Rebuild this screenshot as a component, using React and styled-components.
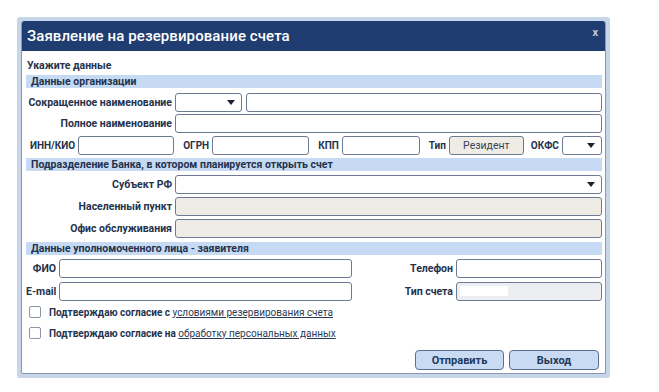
import React from "react";
import styled, { createGlobalStyle } from "styled-components";

const Global = createGlobalStyle`
  body {
    margin: 0;
    background: #fff;
    font-family: Roboto, "Liberation Sans", sans-serif;
  }
`;

const Page = styled.div`
  padding: 17px 0 0 17px;
`;

const Frame = styled.div`
  width: 585px;
  border: 4px solid #c6d6e8;
  border-radius: 3px;
  background: #c6d6e8;
`;

const Dialog = styled.div`
  background: #fff;
  border: 1px solid #8798b2;
  border-top: none;
  border-radius: 3px 3px 2px 2px;
  height: 353px;
  box-sizing: border-box;
  overflow: hidden;
`;

const Header = styled.div`
  height: 30px;
  background: #1f3d70;
  display: flex;
  align-items: center;
  justify-content: space-between;
  padding: 0 8px 0 6px;
  margin: 0 -1px;
`;

const Title = styled.div`
  color: #fff;
  font-size: 15px;
  font-weight: 500;
  letter-spacing: 0.1px;
`;

const Close = styled.div`
  color: #c3cad6;
  font-size: 11px;
  font-weight: 700;
  margin-top: -7px;
`;

const Body = styled.div`
  padding: 9px 3px 0 4px;
  color: #24324c;
  font-size: 10.5px;
  font-weight: 500;
`;

const Hint = styled.div`
  font-weight: 700;
  padding-left: 1px;
  line-height: 12px;
  margin-bottom: 3px;
`;

const SectionBar = styled.div`
  background: #c6daf4;
  height: 13px;
  line-height: 13px;
  padding-left: 5px;
  font-weight: 700;
  margin: ${(p) => p.$m || "0"};
`;

const FormGrid = styled.div`
  display: grid;
  grid-template-columns: 146px 1fr;
  column-gap: 3px;
  row-gap: ${(p) => p.$gap || "2px"};
  margin-top: ${(p) => p.$top || "4px"};
`;

const Label = styled.div`
  text-align: right;
  font-weight: 700;
  white-space: nowrap;
  align-self: center;
`;

const Field = styled.div`
  position: relative;
  height: 19px;
  box-sizing: border-box;
  border: 1px solid #6d7b92;
  border-radius: 3px;
  background: ${(p) => p.$bg || "#fff"};
  width: ${(p) => p.$w || "auto"};
  flex: ${(p) => (p.$w ? "none" : "1")};
`;

const Arrow = styled.span`
  position: absolute;
  right: 6px;
  top: 6px;
  width: 0;
  height: 0;
  border-left: 4px solid transparent;
  border-right: 4px solid transparent;
  border-top: 5px solid #1c2230;
`;

const Row = styled.div`
  display: flex;
  align-items: center;
  gap: 3px;
  margin-top: 3px;
`;

const Split = styled.div`
  display: flex;
  gap: 4px;
`;

const InlineLabel = styled.span`
  font-weight: 700;
  font-size: 10px;
  white-space: nowrap;
  flex: none;
  margin-left: ${(p) => p.$ml || "0"};
`;

const Resident = styled.div`
  width: 75px;
  height: 19px;
  flex: none;
  box-sizing: border-box;
  border: 1px solid #6d7b92;
  border-radius: 3px;
  background: #efebe5;
  display: flex;
  align-items: center;
  justify-content: center;
  font-weight: 400;
  color: #3a4458;
`;

const PersonGrid = styled.div`
  display: grid;
  grid-template-columns: 30px 293px 1fr 146px;
  column-gap: 3px;
  row-gap: 4px;
  margin-top: 4px;
`;

const Patch = styled.div`
  position: absolute;
  left: 3px;
  top: 3px;
  width: 48px;
  height: 10px;
  background: #fff;
`;

const Check = styled.label`
  display: flex;
  align-items: center;
  height: 14px;
  margin: ${(p) => p.$m || "0"};
  padding-left: 3px;
  font-weight: 700;
  font-size: 10px;
  white-space: pre;
`;

const Box = styled.span`
  width: 10px;
  height: 10px;
  border: 1px solid #8b95a7;
  border-radius: 2px;
  background: #fff;
  margin-right: 8px;
`;

const Link = styled.a`
  color: #2b3a55;
  font-weight: 400;
  font-size: 10px;
  text-decoration: underline;
`;

const Buttons = styled.div`
  display: flex;
  justify-content: flex-end;
  gap: 5px;
  margin-top: 10px;
  padding-right: 3px;
`;

const Button = styled.button`
  width: ${(p) => p.$w || "89px"};
  height: 20px;
  border: 1px solid #5b6e8e;
  border-radius: 4px;
  background: #c9dbf3;
  color: #22385c;
  font-family: inherit;
  font-size: 11px;
  font-weight: 700;
  padding: 0;
`;

export default function App() {
  return (
    <Page>
      <Global />
      <Frame>
        <Dialog>
          <Header>
            <Title>Заявление на резервирование счета</Title>
            <Close>x</Close>
          </Header>
          <Body>
            <Hint>Укажите данные</Hint>
            <SectionBar>Данные организации</SectionBar>
            <FormGrid $top="5px">
              <Label>Сокращенное наименование</Label>
              <Split>
                <Field $w="67px">
                  <Arrow />
                </Field>
                <Field />
              </Split>
              <Label>Полное наименование</Label>
              <Field />
            </FormGrid>
            <Row>
              <InlineLabel $ml="4px">ИНН/КИО</InlineLabel>
              <Field $w="96px" />
              <InlineLabel $ml="6px">ОГРН</InlineLabel>
              <Field $w="97px" />
              <InlineLabel $ml="6px">КПП</InlineLabel>
              <Field $w="78px" />
              <InlineLabel $ml="6px">Тип</InlineLabel>
              <Resident>Резидент</Resident>
              <InlineLabel $ml="4px">ОКФС</InlineLabel>
              <Field $w="40px">
                <Arrow />
              </Field>
            </Row>
            <SectionBar $m="3px 0 0">
              Подразделение Банка, в котором планируется открыть счет
            </SectionBar>
            <FormGrid $top="4px" $gap="3px">
              <Label>Субъект РФ</Label>
              <Field>
                <Arrow />
              </Field>
              <Label>Населенный пункт</Label>
              <Field $bg="#efece6" />
              <Label>Офис обслуживания</Label>
              <Field $bg="#efece6" />
            </FormGrid>
            <SectionBar $m="4px 0 0">Данные уполномоченного лица - заявителя</SectionBar>
            <PersonGrid>
              <Label>ФИО</Label>
              <Field />
              <Label>Телефон</Label>
              <Field />
              <Label>E-mail</Label>
              <Field />
              <Label>Тип счета</Label>
              <Field $bg="#eceef2">
                <Patch />
              </Field>
            </PersonGrid>
            <Check $m="4px 0 0">
              <Box />
              Подтверждаю согласие с <Link>условиями резервирования счета</Link>
            </Check>
            <Check $m="7px 0 0">
              <Box />
              Подтверждаю согласие на <Link>обработку персональных данных</Link>
            </Check>
            <Buttons>
              <Button>Отправить</Button>
              <Button $w="90px">Выход</Button>
            </Buttons>
          </Body>
        </Dialog>
      </Frame>
    </Page>
  );
}
